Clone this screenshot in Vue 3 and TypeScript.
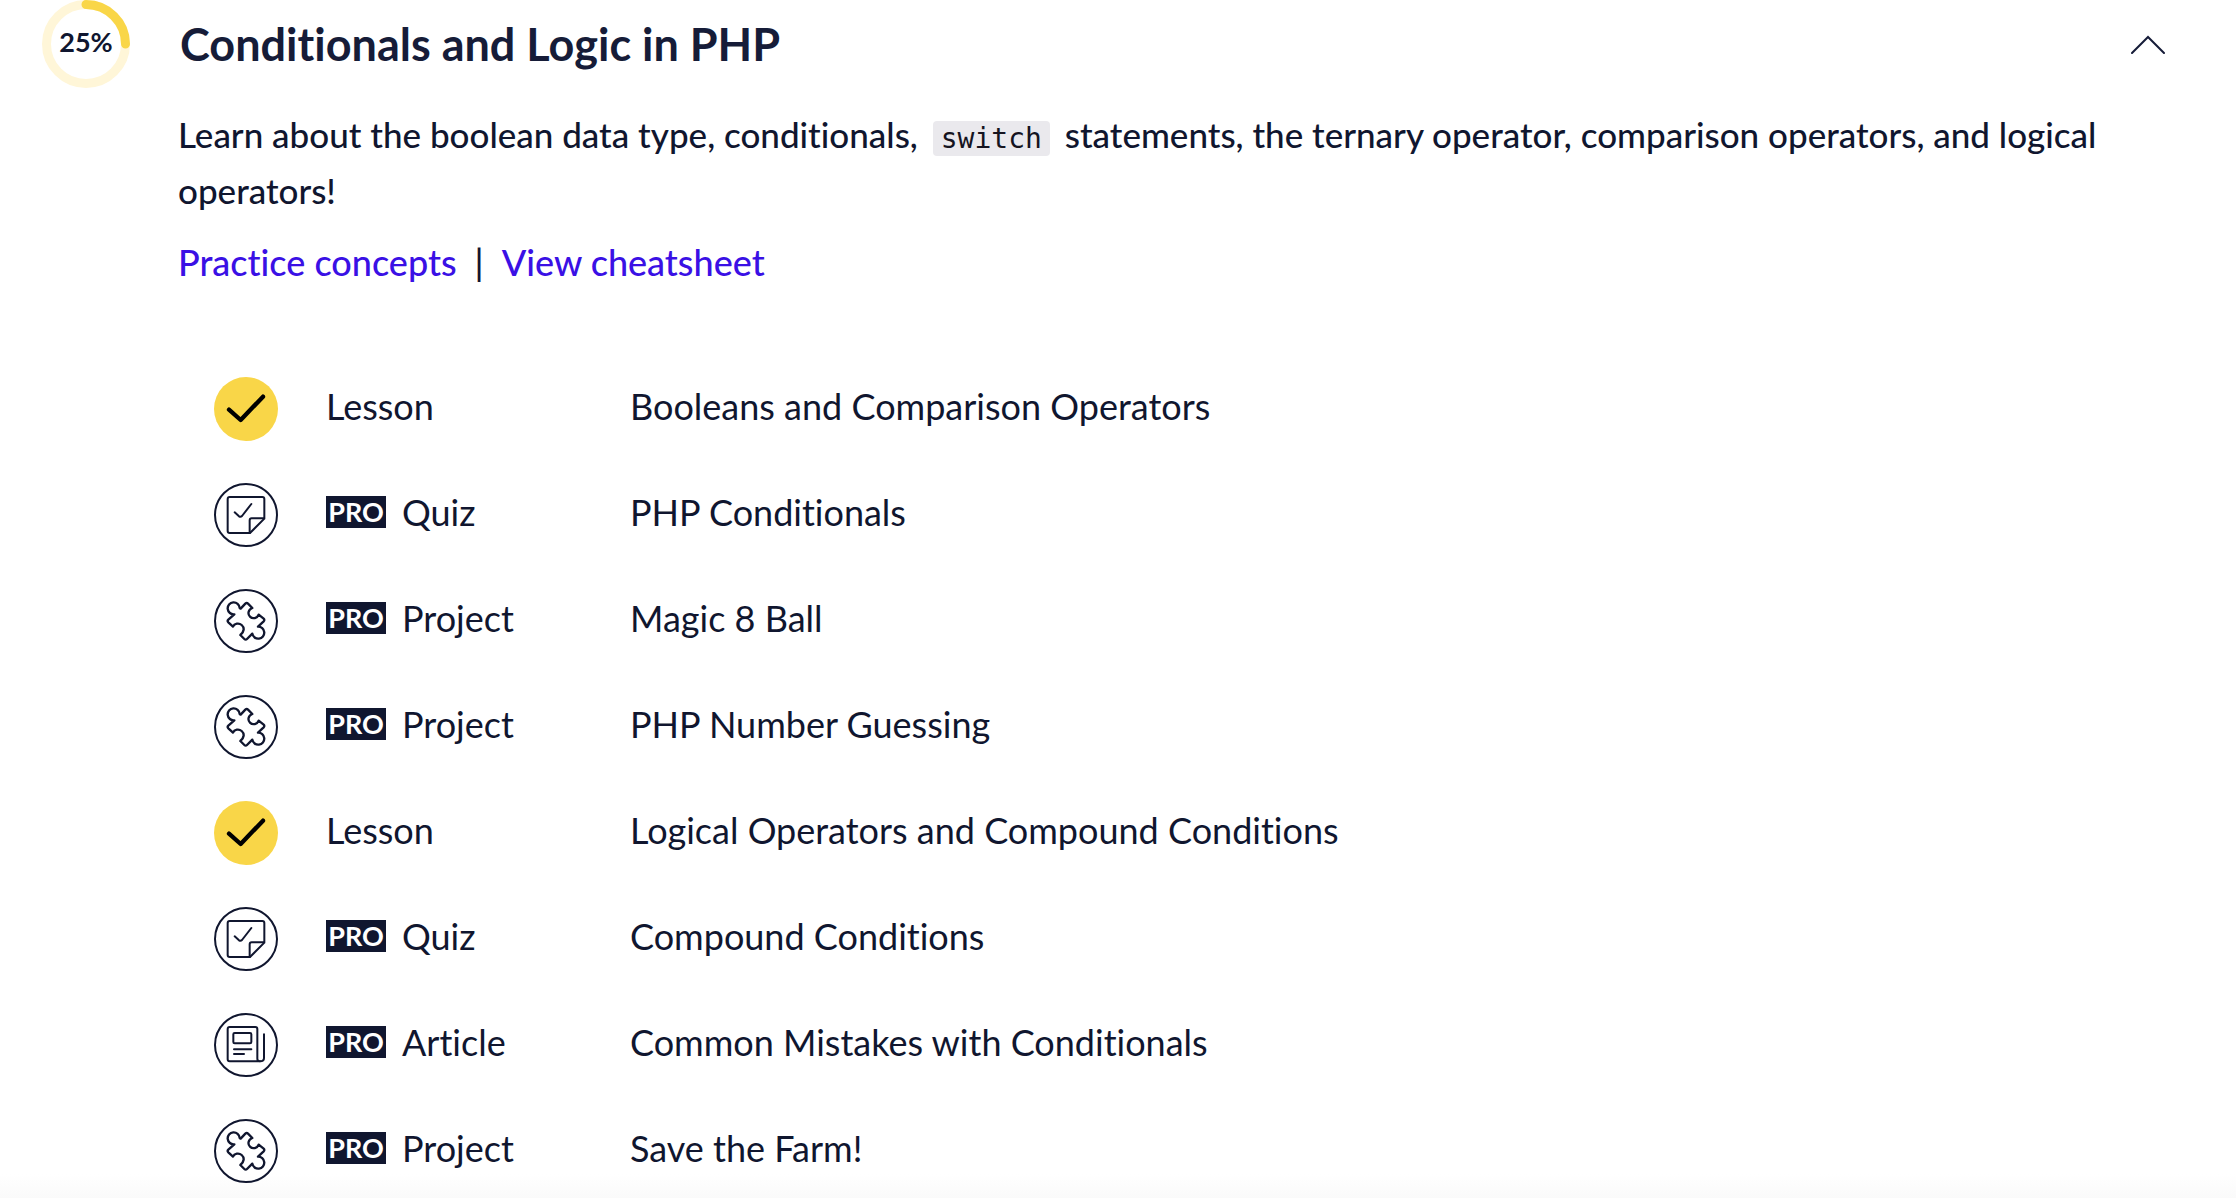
<script setup lang="ts">
import { ref } from 'vue'

type Kind = 'Lesson' | 'Quiz' | 'Project' | 'Article'

interface Item {
  kind: Kind
  title: string
  pro: boolean
  done: boolean
}

const open = ref(true)
const progress = 25
const circumference = 2 * Math.PI * 79

const items: Item[] = [
  { kind: 'Lesson', title: 'Booleans and Comparison Operators', pro: false, done: true },
  { kind: 'Quiz', title: 'PHP Conditionals', pro: true, done: false },
  { kind: 'Project', title: 'Magic 8 Ball', pro: true, done: false },
  { kind: 'Project', title: 'PHP Number Guessing', pro: true, done: false },
  { kind: 'Lesson', title: 'Logical Operators and Compound Conditions', pro: false, done: true },
  { kind: 'Quiz', title: 'Compound Conditions', pro: true, done: false },
  { kind: 'Article', title: 'Common Mistakes with Conditionals', pro: true, done: false },
  { kind: 'Project', title: 'Save the Farm!', pro: true, done: false },
]
</script>

<template>
  <main class="module">
    <header class="head">
      <div class="ring">
        <svg viewBox="0 0 176 176" aria-hidden="true">
          <circle class="track" cx="88" cy="88" r="79" />
          <circle
            class="bar"
            cx="88"
            cy="88"
            r="79"
            transform="rotate(-90 88 88)"
            :stroke-dasharray="`${(circumference * progress) / 100} ${circumference}`"
          />
        </svg>
        <span class="percent">{{ progress }}%</span>
      </div>
      <h2 class="heading">
        <button class="toggle" type="button" :aria-expanded="open" @click="open = !open">
          <span>Conditionals and Logic in PHP</span>
          <svg class="chevron" :class="{ closed: !open }" viewBox="0 0 34 20" aria-hidden="true">
            <path d="M1 19 17 3l16 16" />
          </svg>
        </button>
      </h2>
    </header>

    <section v-if="open" class="body">
      <p class="about">
        Learn about the boolean data type, conditionals, <code>switch</code> statements, the ternary
        operator, comparison operators, and logical operators!
      </p>
      <nav class="links">
        <a href="#practice">Practice concepts</a>
        <span>|</span>
        <a href="#cheatsheet">View cheatsheet</a>
      </nav>

      <ul class="items">
        <li v-for="item in items" :key="item.title">
          <a class="item" href="#item">
            <svg class="icon" viewBox="0 0 192 192" aria-hidden="true">
              <template v-if="item.done">
                <circle class="done" cx="96" cy="96" r="96" />
                <path class="tick" d="M45 98l35 31 67-70" />
              </template>
              <template v-else>
                <circle cx="96" cy="96" r="93" />
                <template v-if="item.kind === 'Quiz'">
                  <path d="M47 42h98q6 0 6 6v59l-43 43H47q-6 0-6-6V48q0-6 6-6z" />
                  <path d="M150 106h-37q-6 0-6 6v38M62 88l13 12q5 3 9-1l28-36" />
                </template>
                <path
                  v-else-if="item.kind === 'Project'"
                  class="heavy"
                  d="M80 59 94 44q4-4 8 0l13 13C103 61 100 75 108 83C116 91 130 88 134 77l15 12q4 4 0 8l-17 16A18 18 0 1 1 115 134L99 150q-4 4-8 0L79 138C91 128 92 116 83 108C75 101 61 103 57 113L43 100q-4-4 0-8L61 76A18 18 0 1 1 77 57z"
                />
                <template v-else>
                  <path d="M47 42h77q6 0 6 6v89q0 8 8 8H47q-6 0-6-6V48q0-6 6-6z" />
                  <path d="M138 145q12 0 12-10V64M62 60h46q4 0 4 4v23q0 4-4 4H62q-4 0-4-4V64q0-4 4-4zM60 109h52M60 123h30" />
                </template>
              </template>
            </svg>
            <span class="kind">
              <span v-if="item.pro" class="pro">PRO</span>
              <span>{{ item.kind }}</span>
            </span>
            <span class="title">{{ item.title }}</span>
          </a>
        </li>
      </ul>
    </section>
  </main>
</template>

<style>
body {
  margin: 0;
  background: #fff;
}
</style>

<style scoped>
.module {
  box-sizing: border-box;
  min-height: 100vh;
  padding: 0 71px 14px 42px;
  overflow: hidden;
  color: #10162f;
  background: linear-gradient(to top, #fafafa, #fff 24px);
  font-family: Lato, 'Liberation Sans', sans-serif;
  font-size: 36px;
  font-variant-ligatures: none;
  line-height: 56px;
}

.head {
  display: flex;
  gap: 50px;
}

.ring {
  position: relative;
  flex: none;
  width: 88px;
  height: 88px;
}

.ring svg {
  display: block;
  fill: none;
  stroke-width: 18;
}

.track {
  stroke: #fff6d8;
}

.bar {
  stroke: #f9d648;
  stroke-linecap: round;
}

.percent {
  position: absolute;
  inset: 0;
  display: grid;
  place-items: center;
  padding-bottom: 4px;
  font-size: 27px;
  font-weight: 700;
  line-height: 32px;
}

.heading {
  flex: 1;
  margin: 0;
}

.toggle {
  display: flex;
  align-items: center;
  justify-content: space-between;
  width: 100%;
  height: 88px;
  padding: 0;
  border: 0;
  color: #161c38;
  background: none;
  font: inherit;
  font-size: 45px;
  font-weight: 700;
  font-variant-ligatures: none;
  cursor: pointer;
}

.chevron {
  width: 34px;
  height: 20px;
  fill: none;
  stroke: currentColor;
  stroke-width: 2;
  stroke-linecap: round;
}

.chevron.closed {
  transform: rotate(180deg);
}

.body {
  padding: 18px 0 0 136px;
}

.about {
  margin: 0;
  font-size: 35px;
  font-weight: 500;
}

code {
  margin: 0 6px;
  padding: 1px 8px;
  border-radius: 4px;
  color: #15141f;
  background: #eae9ed;
  font-family: 'DejaVu Sans Mono', monospace;
  font-size: 28px;
  font-weight: 400;
  line-height: 32px;
}

.links {
  display: flex;
  gap: 18px;
  margin-top: 16px;
  font-weight: 500;
}

.links a {
  color: #3a10e5;
  text-decoration: none;
}

.items {
  display: grid;
  gap: 42px;
  margin: 87px 0 0;
  padding: 0 0 0 36px;
  list-style: none;
}

.item {
  display: grid;
  grid-template-columns: 64px 256px 1fr;
  column-gap: 48px;
  height: 64px;
  color: inherit;
  line-height: 58px;
  text-decoration: none;
}

.icon {
  width: 64px;
  height: 64px;
  fill: none;
  stroke: #10162f;
  stroke-width: 6;
  stroke-linejoin: round;
  stroke-linecap: round;
}

.icon .heavy {
  stroke-width: 7;
}

.icon .done {
  fill: #f9d648;
  stroke: none;
}

.icon .tick {
  stroke: #000;
  stroke-width: 13;
}

.kind {
  display: flex;
  align-items: center;
  gap: 16px;
  height: 58px;
}

.pro {
  width: 60px;
  color: #fff;
  background: #10162f;
  font-size: 27px;
  font-weight: 700;
  line-height: 32px;
  text-align: center;
}
</style>
